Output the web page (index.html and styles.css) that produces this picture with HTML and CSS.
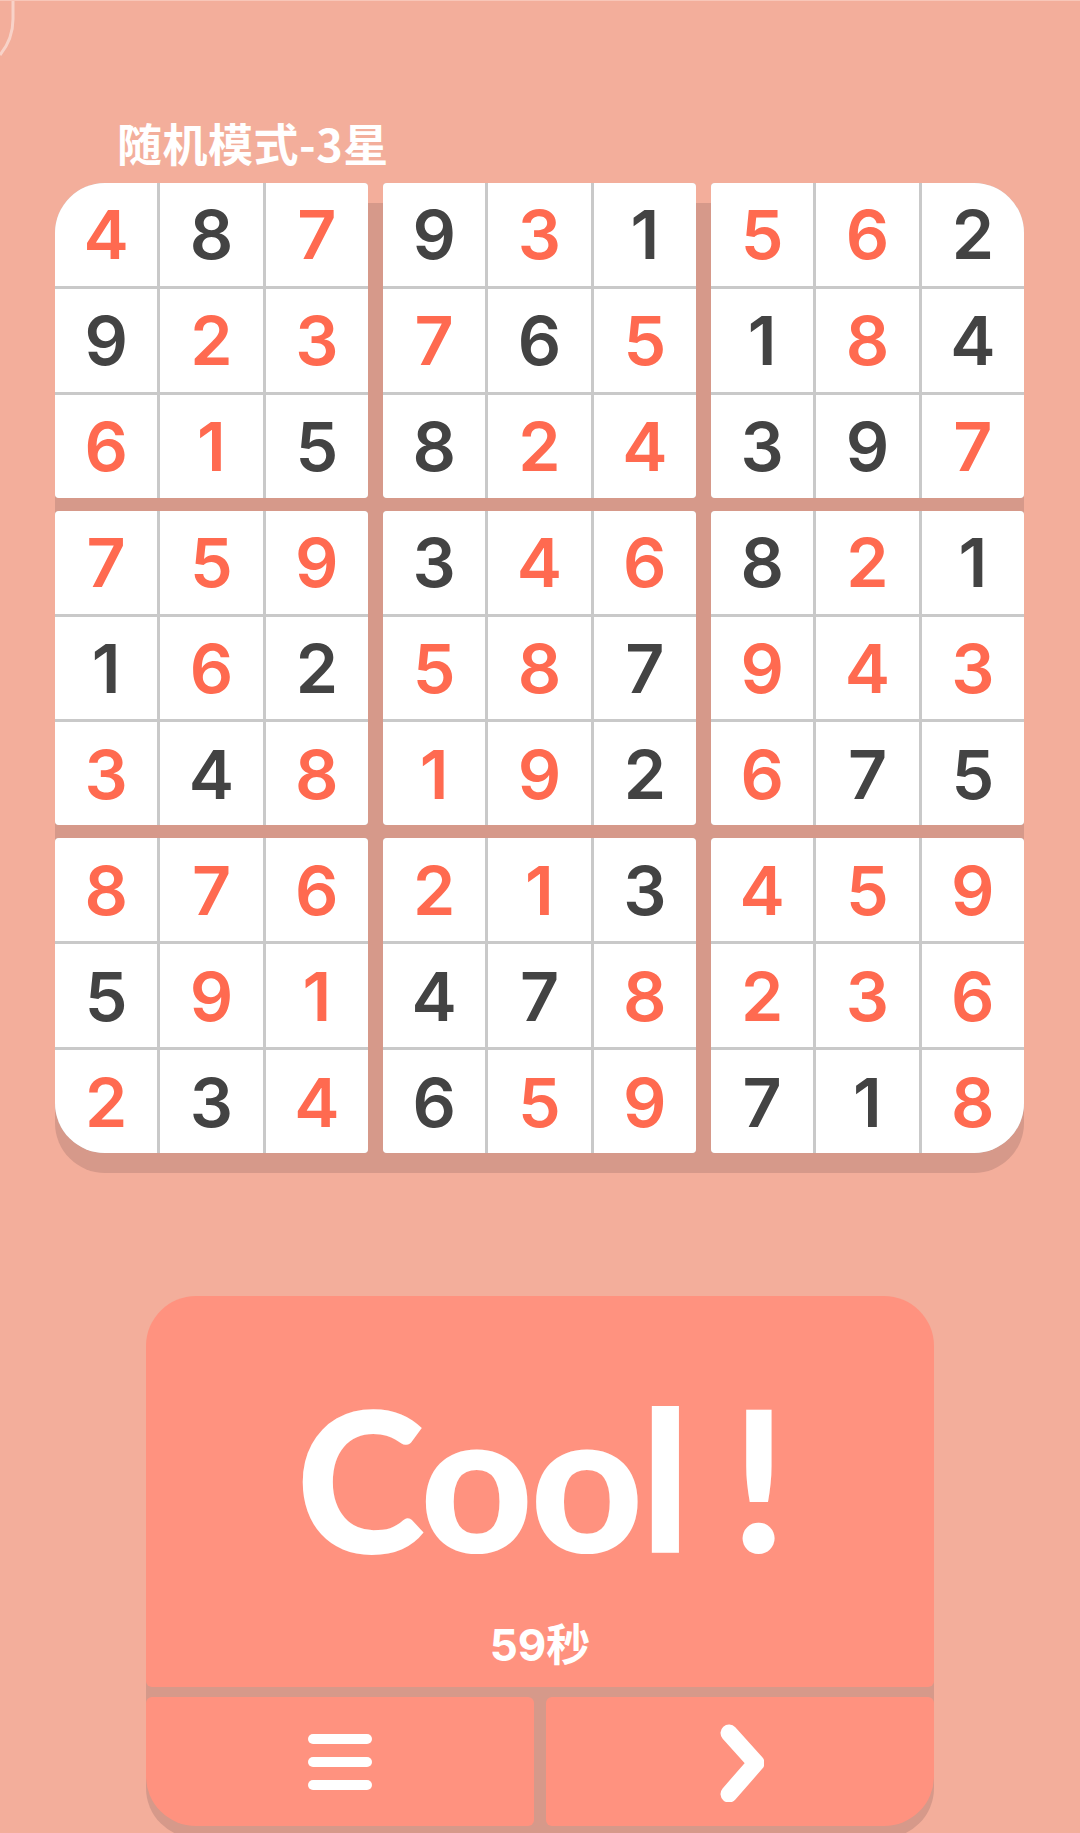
FILE: index.html
```html
<!DOCTYPE html>
<html lang="zh">
<head>
    <meta charset="UTF-8">
    <meta name="viewport" content="width=device-width, initial-scale=1.0">
    <title>数独</title>
    <link rel="stylesheet" href="styles.css">
</head>
<body>
    <div class="screen">
        <svg class="back-edge" width="20" height="60" viewBox="0 0 20 60">
            <path d="M13 0 V18 Q13 38 0 54" fill="none" stroke="rgba(255,255,255,0.45)" stroke-width="3"/>
        </svg>

        <h1 class="title">随机模式-3星</h1>

        <div class="board" id="board"></div>

        <div class="result">
            <div class="result-main">
                <div class="cool">Cool !</div>
                <div class="time">59秒</div>
            </div>
            <div class="actions">
                <button class="action menu">
                    <span class="bar"></span>
                    <span class="bar"></span>
                    <span class="bar"></span>
                </button>
                <button class="action next">
                    <svg width="48" height="80" viewBox="0 0 48 80">
                        <polyline points="13,11 40,41 13,72" fill="none" stroke="#fff" stroke-width="17" stroke-linecap="round" stroke-linejoin="round"/>
                    </svg>
                </button>
            </div>
        </div>
    </div>

    <script>
        const digits = [
            '487931562',
            '923765184',
            '615824397',
            '759346821',
            '162587943',
            '348192675',
            '876213459',
            '591478236',
            '234659718'
        ];
        // 1 = player filled (red), 0 = given (dark)
        const filled = [
            '101010110',
            '011101010',
            '110011001',
            '111011010',
            '010110111',
            '101110100',
            '111110111',
            '011001111',
            '101011001'
        ];

        const board = document.querySelector('#board');

        for (let b = 0; b < 9; b++) {
            const block = document.createElement('div');
            block.className = 'block';
            for (let i = 0; i < 9; i++) {
                const row = Math.floor(b / 3) * 3 + Math.floor(i / 3);
                const col = (b % 3) * 3 + (i % 3);
                const cell = document.createElement('div');
                cell.className = filled[row][col] === '1' ? 'cell filled' : 'cell';
                cell.textContent = digits[row][col];
                block.appendChild(cell);
            }
            board.appendChild(block);
        }
    </script>
</body>
</html>
```

FILE: styles.css
```css
body {
    margin: 0;
    background: #F3AE9B;
    font-family: "Inter", "Noto Sans CJK SC", sans-serif;
}
.screen {
    position: relative;
    width: 1080px;
    height: 1833px;
    overflow: hidden;
    border-top: 1px solid #F8C6B8;
    box-sizing: border-box;
}
.back-edge {
    position: absolute;
    left: 0;
    top: 0;
}
.title {
    margin: 0 0 7px;
    padding: 108px 0 0 117px;
    font-size: 45px;
    letter-spacing: 0.5px;
    line-height: 67px;
    font-weight: 700;
    color: #fff;
    font-family: "Noto Sans CJK SC", sans-serif;
}

/* board */
.board {
    position: relative;
    margin-left: 55px;
    width: 969px;
    height: 970px;
    display: grid;
    grid-template-columns: repeat(3, 1fr);
    grid-template-rows: repeat(3, 1fr);
    column-gap: 15px;
    row-gap: 13px;
}
.board::before {
    content: "";
    position: absolute;
    left: 0;
    right: 0;
    top: 20px;
    bottom: -20px;
    background: #D6998A;
    border-radius: 50px;
}
.block {
    position: relative;
    display: grid;
    grid-template-columns: repeat(3, 1fr);
    grid-template-rows: repeat(3, 1fr);
    gap: 3px;
    background: #C9C9C9;
    border-radius: 4px;
    overflow: hidden;
}
.block:nth-child(1) {
    border-top-left-radius: 50px;
}
.block:nth-child(3) {
    border-top-right-radius: 50px;
}
.block:nth-child(7) {
    border-bottom-left-radius: 50px;
}
.block:nth-child(9) {
    border-bottom-right-radius: 50px;
}
.cell {
    background: #fff;
    display: flex;
    align-items: center;
    justify-content: center;
    font-size: 68px;
    font-weight: 600;
    color: #434343;
}
.cell.filled {
    color: #FF6A50;
}

/* result panel */
.result {
    position: relative;
    width: 788px;
    margin: 143px auto 0;
}
.result::before {
    content: "";
    position: absolute;
    left: 0;
    right: 0;
    top: 12px;
    bottom: -12px;
    background: #D6998A;
    border-radius: 50px;
}
.result-main {
    position: relative;
    height: 391px;
    background: #FF927F;
    border-radius: 50px 50px 6px 6px;
    display: flex;
    flex-direction: column;
    align-items: center;
    color: #fff;
}
.cool {
    margin-top: 84px;
    font-family: "Lato", sans-serif;
    font-size: 196px;
    font-weight: 900;
    letter-spacing: -3px;
    line-height: 1;
}
.time {
    margin-top: 47px;
    font-size: 44px;
    font-weight: 700;
    line-height: 1;
}
.actions {
    position: relative;
    display: grid;
    grid-template-columns: 1fr 1fr;
    gap: 12px;
    margin-top: 10px;
    height: 129px;
}
.action {
    border: none;
    padding: 0;
    background: #FF927F;
    border-radius: 6px;
    display: flex;
    flex-direction: column;
    align-items: center;
    justify-content: center;
    gap: 13px;
    cursor: pointer;
}
.action.menu {
    border-bottom-left-radius: 50px;
}
.action.next {
    border-bottom-right-radius: 50px;
}
.bar {
    display: block;
    width: 64px;
    height: 10px;
    border-radius: 5px;
    background: #fff;
}
```
